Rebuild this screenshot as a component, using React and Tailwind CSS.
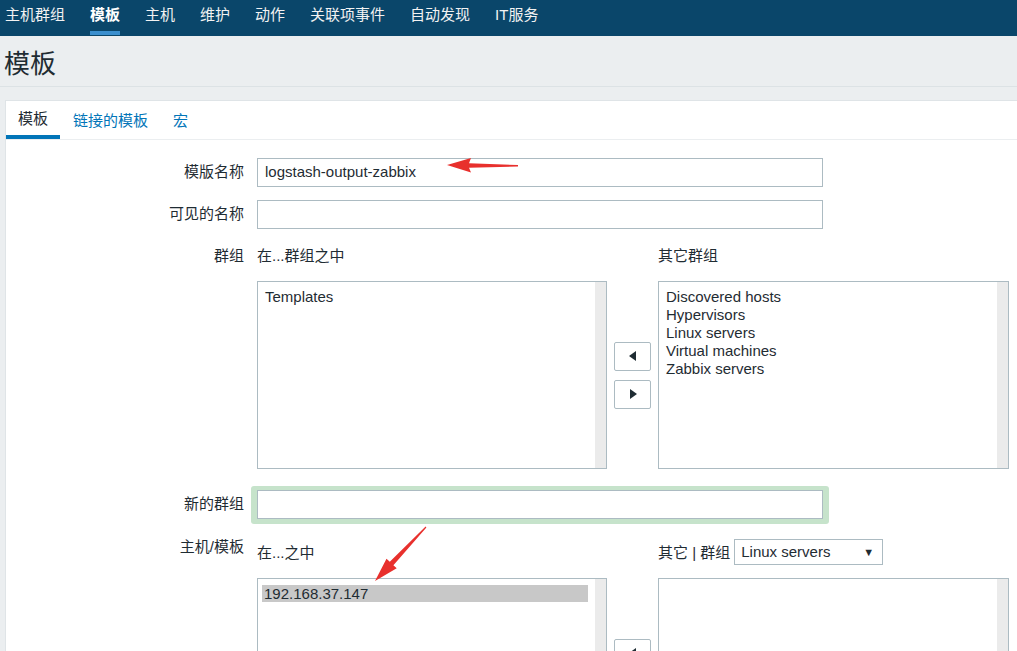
import React from "react";

const navItems = ["主机群组", "模板", "主机", "维护", "动作", "关联项事件", "自动发现", "IT服务"];
const otherGroups = ["Discovered hosts", "Hypervisors", "Linux servers", "Virtual machines", "Zabbix servers"];

const font = { fontFamily: '"Liberation Sans", Arial, "Noto Sans CJK SC", sans-serif' };

const ListBox = ({ children }) => (
    <div className="flex h-[188px] border border-[#acbbc2] bg-white">
        <div className="flex-1 pl-[4px] pr-[7px] pt-[6px] leading-[18px]">{children}</div>
        <div className="w-[11px] bg-[#ebebeb]" />
    </div>
);

const MoveButtons = () => (
    <div className="flex flex-col items-center justify-center gap-[9px]">
        <button type="button" className="flex h-[29px] w-[37px] items-center justify-center rounded-[2px] border border-[#acbbc2] bg-white text-[#1f2c33]">
            <svg width="8" height="10" viewBox="0 0 8 10"><path d="M7 0v10L0 5z" fill="currentColor" /></svg>
        </button>
        <button type="button" className="flex h-[29px] w-[37px] items-center justify-center rounded-[2px] border border-[#acbbc2] bg-white text-[#1f2c33]">
            <svg width="8" height="10" viewBox="0 0 8 10"><path d="M1 0v10l7-5z" fill="currentColor" /></svg>
        </button>
    </div>
);

export default function App() {
    return (
        <div className="relative h-[651px] w-[1017px] overflow-hidden bg-[#ebeef0] text-[15px] text-[#1f2c33]" style={font}>
            {/* top menu */}
            <div className="flex h-[36px] gap-[25px] bg-[#0a466a] pl-[5px] text-[#f2f2f2]">
                {navItems.map((item) => (
                    <div key={item} className="flex flex-col">
                        <span className={"flex flex-1 items-center " + (item === "模板" ? "font-bold text-white" : "")}>{item}</span>
                        <span className={"mb-[1px] h-[4px] " + (item === "模板" ? "bg-[#3b8fce]" : "")} />
                    </div>
                ))}
            </div>

            {/* page title */}
            <div className="flex h-[51px] items-center border-b border-[#dce2e5] pl-[4px] pt-[5px] text-[26px] leading-none">模板</div>

            {/* panel */}
            <div className="ml-[5px] mt-[13px] border-l border-t border-[#dfe4e7] bg-white pb-[40px]">
                <div className="flex h-[39px] gap-[1px] border-b border-[#ebeef0]">
                    <div className="flex flex-col px-3">
                        <span className="flex flex-1 items-center pt-[2px]">模板</span>
                        <span className="-mx-3 h-[4px] bg-[#0275b8]" />
                    </div>
                    <div className="flex items-center px-3 pt-[2px] text-[#0275b8]">链接的模板</div>
                    <div className="flex items-center px-3 pt-[2px] text-[#0275b8]">宏</div>
                </div>

                <div className="grid grid-cols-[238px_1fr] gap-x-[13px] pt-[18px]">
                    {/* template name */}
                    <div className="flex h-[29px] items-center justify-end">模版名称</div>
                    <div className="flex h-[29px] w-[566px] items-center border border-[#acbbc2] pl-[7px]">logstash-output-zabbix</div>

                    {/* visible name */}
                    <div className="mt-[13px] flex h-[29px] items-center justify-end">可见的名称</div>
                    <div className="mt-[13px] h-[29px] w-[566px] border border-[#acbbc2]" />

                    {/* groups */}
                    <div className="mt-[13px] flex h-[29px] items-center justify-end">群组</div>
                    <div className="mt-[13px] grid grid-cols-[350px_37px_351px] gap-x-[7px]">
                        <div className="flex h-[29px] items-center">在...群组之中</div>
                        <div />
                        <div className="flex h-[29px] items-center">其它群组</div>
                        <div className="mt-[10px]">
                            <ListBox>
                                <div className="pl-[3px]">Templates</div>
                            </ListBox>
                        </div>
                        <div className="mt-[10px] flex">
                            <MoveButtons />
                        </div>
                        <div className="mt-[10px]">
                            <ListBox>
                                {otherGroups.map((g) => (
                                    <div key={g} className="pl-[3px]">{g}</div>
                                ))}
                            </ListBox>
                        </div>
                    </div>

                    {/* new group */}
                    <div className="mt-[17px] flex h-[37px] items-center justify-end">新的群组</div>
                    <div className="mt-[17px] -ml-[6px] w-[578px] rounded-[3px] bg-[#c6e3cb] px-[6px] pb-[5px] pt-[4px]">
                        <div className="h-[29px] w-[566px] border border-[#acbbc2] bg-white" />
                    </div>

                    {/* hosts / templates */}
                    <div className="mt-[13px] flex h-[20px] items-center justify-end">主机/模板</div>
                    <div className="mt-[15px] grid grid-cols-[350px_37px_351px] gap-x-[7px]">
                        <div className="flex h-[26px] items-center pt-[2px]">在...之中</div>
                        <div />
                        <div className="flex h-[26px] items-center gap-[4px]">
                            <span className="pt-[2px]">其它 | 群组</span>
                            <div className="flex h-[26px] w-[149px] items-center justify-between border border-[#acbbc2] pl-[6px] pr-[8px]">
                                <span>Linux servers</span>
                                <span className="text-[11px]">▼</span>
                            </div>
                        </div>
                        <div className="mt-[13px]">
                            <ListBox>
                                <div className="w-[326px] bg-[#c8c8c8] pl-[2px] leading-[17px]">192.168.37.147</div>
                            </ListBox>
                        </div>
                        <div className="mt-[13px] flex">
                            <MoveButtons />
                        </div>
                        <div className="mt-[13px]">
                            <ListBox />
                        </div>
                    </div>
                </div>
            </div>

            {/* red annotation arrows */}
            <svg className="pointer-events-none absolute inset-0" width="1017" height="651" viewBox="0 0 1017 651">
                <polygon
                    points="447,165 471,158 469,163.2 518,165 518,166.6 469,167.8 471,172.6"
                    fill="#e8302d"
                />
                <polygon
                    points="375,581 396.7,568.3 393.4,565.2 426.4,527.4 425.6,526.6 389.8,561.8 386.5,558.7"
                    fill="#e8302d"
                />
            </svg>
        </div>
    );
}
